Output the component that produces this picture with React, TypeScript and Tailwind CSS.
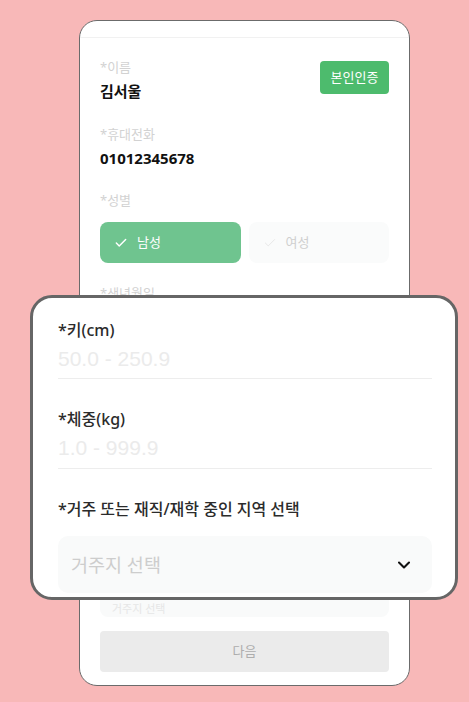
import { ChevronDown, Check } from "lucide-react";

const font = { fontFamily: '"Noto Sans", "Noto Sans CJK KR", sans-serif' };
const numFont = { fontFamily: '"Liberation Sans", "Noto Sans CJK KR", sans-serif' };

export default function App() {
  return (
    <div className="relative w-[469px] h-[702px] bg-[#f8b8b8] overflow-hidden" style={font}>
      {/* phone screen */}
      <div className="absolute left-[79px] top-[20px] w-[331px] h-[666px] bg-white border border-[#6b6b6b] rounded-[18px] flex flex-col overflow-hidden">
        <div className="h-[17px] shrink-0 border-b border-[#f1f1f1]" />
        <div className="px-[20px] pt-[20px] flex flex-col">
          <div className="flex items-start justify-between">
            <div className="flex flex-col">
              <span className="text-[13px] leading-[18px] text-[#d2d2d2]">*이름</span>
              <span className="mt-[5px] text-[15px] leading-[20px] font-bold text-[#111]">김서울</span>
            </div>
            <button className="mt-[3px] w-[69px] h-[33px] rounded-[4px] bg-[#4dbb6d] text-white text-[13px] leading-none">
              본인인증
            </button>
          </div>
          <span className="mt-[24px] text-[13px] leading-[18px] text-[#d2d2d2]">*휴대전화</span>
          <span className="mt-[5px] text-[15px] leading-[20px] font-bold text-[#111]">01012345678</span>
          <span className="mt-[23px] text-[13px] leading-[18px] text-[#d2d2d2]">*성별</span>
          <div className="mt-[13px] grid grid-cols-2 gap-[8px]">
            <div className="h-[41px] rounded-[8px] bg-[#6fc48f] flex items-center pl-[14px] gap-[9px] text-white text-[13px]">
              <Check size={14} strokeWidth={2.5} />
              <span>남성</span>
            </div>
            <div className="h-[41px] rounded-[8px] bg-[#fafbfb] flex items-center pl-[14px] gap-[9px] text-[#cfcfcf] text-[13px]">
              <Check size={14} strokeWidth={1.5} className="text-[#e4e4e4]" />
              <span>여성</span>
            </div>
          </div>
          <span className="mt-[21px] text-[13px] leading-[18px] text-[#d2d2d2]">*생년월일</span>
        </div>
        <div className="mt-auto px-[20px] pb-[13px] flex flex-col">
          <div className="h-[28px] rounded-b-[8px] bg-[#f9fafa] pl-[12px] text-[11px] text-[#e6e6e6] flex items-end">거주지 선택</div>
          <button className="mt-[14px] h-[41px] rounded-[4px] bg-[#ebebeb] text-[#adadad] text-[13px]">다음</button>
        </div>
      </div>

      {/* zoomed detail card */}
      <div className="absolute left-[30px] top-[295px] w-[428px] h-[305px] bg-white border-[3px] border-[#666] rounded-[22px] overflow-hidden pl-[25px] pr-[23px] pt-[21px] flex flex-col">
        <span className="text-[16px] leading-[22px] font-medium text-[#2b2b2b]">*키(cm)</span>
        <span className="mt-[5px] text-[21px] leading-[26px] text-[#ebebeb]" style={numFont}>50.0 - 250.9</span>
        <div className="mt-[6px] border-b border-[#ededed]" />
        <span className="mt-[29px] text-[16px] leading-[22px] font-medium text-[#2b2b2b]">*체중(kg)</span>
        <span className="mt-[5px] text-[21px] leading-[26px] text-[#ebebeb]" style={numFont}>1.0 - 999.9</span>
        <div className="mt-[7px] border-b border-[#ededed]" />
        <span className="mt-[29px] text-[16px] leading-[22px] font-medium text-[#2b2b2b]">*거주 또는 재직/재학 중인 지역 선택</span>
        <div className="mt-[16px] h-[57px] rounded-[10px] bg-[#f9fafa] flex items-center justify-between pl-[13px] pr-[18px] shrink-0">
          <span className="text-[18.5px] text-[#cdcdcd]">거주지 선택</span>
          <ChevronDown size={20} strokeWidth={2.5} className="text-[#111]" />
        </div>
      </div>
    </div>
  );
}
